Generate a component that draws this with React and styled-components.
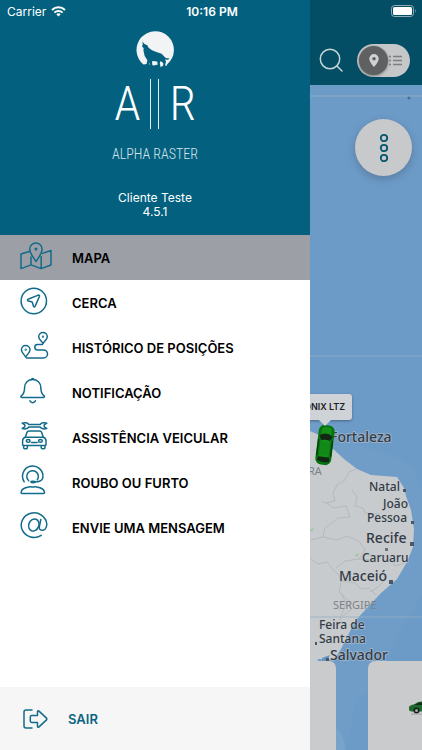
import React, { useState } from 'react';
import styled, { createGlobalStyle, css } from 'styled-components';

const GlobalStyle = createGlobalStyle`
  * {
    box-sizing: border-box;
  }
  body {
    margin: 0;
    font-family: Inter, "Liberation Sans", sans-serif;
  }
`;

const brandFont = css`
  font-family: "Roboto Condensed", "Liberation Sans Narrow", Lato, sans-serif;
  font-weight: 300;
`;

const Screen = styled.div`
  position: relative;
  display: flex;
  min-height: 100vh;
  overflow: hidden;
`;

const StatusBar = styled.div`
  position: absolute;
  z-index: 5;
  top: 0;
  left: 0;
  right: 0;
  display: grid;
  grid-template-columns: 1fr auto 1fr;
  align-items: center;
  height: 22px;
  padding: 0 5px 0 7px;
  font-size: 12px;
  color: #fff;
`;

const Carrier = styled.span`
  display: flex;
  align-items: center;
  gap: 5px;
`;

const Clock = styled.time`
  font-weight: 600;
`;

const Battery = styled.svg`
  justify-self: end;
`;

const Drawer = styled.aside`
  display: flex;
  flex: none;
  flex-direction: column;
  width: 310px;
  background-color: #fff;
`;

const Brand = styled.header`
  display: flex;
  flex-direction: column;
  align-items: center;
  height: 235px;
  padding-top: 31px;
  background-color: #03617f;
  color: #fff;
`;

const Monogram = styled.div`
  display: flex;
  align-items: center;
  justify-content: center;
  gap: 10px;
  height: 50px;
  margin-top: 9px;
  ${brandFont}
  font-size: 48px;
  line-height: 50px;
`;

const Bars = styled.span`
  width: 9px;
  height: 50px;
  border: solid #e3eef2;
  border-width: 0 1px;
`;

const BrandName = styled.div`
  margin-top: 14px;
  ${brandFont}
  font-size: 14px;
  line-height: 22px;
  color: #d5e5ec;
`;

const Account = styled.p`
  margin: 26px 0 0;
  font-size: 12px;
  line-height: 14px;
  text-align: center;
`;

const Menu = styled.nav`
  display: flex;
  flex: 1;
  flex-direction: column;
`;

const MenuLink = styled.a`
  display: flex;
  align-items: center;
  gap: 20px;
  height: 45px;
  padding-left: 20px;
  font-size: 13px;
  font-weight: 600;
  color: #000;
  text-decoration: none;
  ${props => props.$active && css`
    background-color: #9c9fa6;
  `}
`;

const LineIcon = styled.svg`
  flex: none;
  overflow: visible;
  fill: none;
  stroke: #126b8a;
  stroke-width: 1.5;
  stroke-linecap: round;
  stroke-linejoin: round;
`;

const MenuIcon = styled(LineIcon)`
  margin-bottom: 4px;
`;

const LogoutButton = styled.button`
  display: flex;
  align-items: center;
  gap: 20px;
  height: 63px;
  padding: 0 0 0 23px;
  border: none;
  background-color: #f6f6f6;
  font-family: inherit;
  font-size: 13px;
  font-weight: 600;
  color: #0c6482;
  cursor: pointer;
`;

const Main = styled.main`
  display: flex;
  flex: 1;
  flex-direction: column;
  min-width: 0;
  overflow: hidden;
`;

const Toolbar = styled.header`
  display: flex;
  align-items: center;
  justify-content: flex-end;
  gap: 14px;
  height: 85px;
  padding: 35px 12px 0 0;
  background-color: #034e65;
`;

const SearchButton = styled.button`
  display: flex;
  padding: 0;
  border: none;
  background: none;
  cursor: pointer;
`;

const ViewSwitch = styled.button`
  display: flex;
  flex-direction: ${props => (props.$list ? 'row-reverse' : 'row')};
  align-items: center;
  justify-content: space-between;
  width: 53px;
  height: 33px;
  padding: 0 8px 0 2px;
  border: none;
  border-radius: 17px;
  background-color: #c5c7c9;
  cursor: pointer;
`;

const Knob = styled.span`
  display: flex;
  align-items: center;
  justify-content: center;
  width: 29px;
  height: 29px;
  border-radius: 50%;
  background-color: #5f6061;
  box-shadow: 0 1px 3px rgba(0, 0, 0, 0.4);
`;

const MapArea = styled.section`
  position: relative;
  flex: 1;
  overflow: hidden;
  background-color: #6d9bc8;
`;

const MapDrawing = styled.svg`
  position: absolute;
  inset: 0;
  width: 100%;
  height: 100%;
  font-family: "Noto Sans", "Open Sans", sans-serif;
`;

const OptionsButton = styled.button`
  position: absolute;
  top: 34px;
  right: 10px;
  display: flex;
  align-items: center;
  justify-content: center;
  width: 57px;
  height: 57px;
  padding: 0;
  border: none;
  border-radius: 50%;
  background-color: #c8c9cb;
  box-shadow: 0 3px 10px rgba(0, 0, 0, 0.2);
  cursor: pointer;
`;

const VehicleMarker = styled.div`
  position: absolute;
  top: 309px;
  left: -13px;
  display: flex;
  flex-direction: column;
  align-items: center;
  gap: 4px;
`;

const Callout = styled.div`
  position: relative;
  padding: 0 7px;
  border-radius: 3px;
  background-color: #cfd3d8;
  box-shadow: 0 1px 3px rgba(0, 0, 0, 0.35);
  font-size: 9px;
  font-weight: 600;
  line-height: 26px;
  color: #222;
  white-space: nowrap;
  &::after {
    content: "";
    position: absolute;
    top: 26px;
    left: 50%;
    margin-left: -6px;
    border: 6px solid transparent;
    border-top-color: #cfd3d8;
    border-bottom: none;
  }
`;

const Cards = styled.div`
  position: absolute;
  right: 0;
  bottom: 0;
  left: 0;
  display: flex;
  gap: 32px;
  height: 89px;
`;

const PreviousCard = styled.article`
  width: 26px;
  border-radius: 0 7px 0 0;
  background-color: #cacbcc;
`;

const VehicleCard = styled.article`
  display: flex;
  flex: 1;
  justify-content: flex-end;
  padding-top: 38px;
  border-radius: 7px 0 0 0;
  background-color: #cacbcc;
`;

const MENU = [
  {
    id: 'mapa',
    label: 'MAPA',
    icon: (
      <>
        <path d="M9.3 9.5 1 12v14.6l10-3.7 10.2 3.7L31 23V8.5l-8.6 2.9M11 15v7.9M21.2 14.5v12.1" />
        <path d="M16 19.5C13.5 15.5 9.7 11.5 9.7 7.2a6.2 6.2 0 0 1 12.4 0C22.1 11.5 18.5 15.5 16 19.5z" />
        <circle cx="16" cy="7" r="0.8" />
      </>
    ),
  },
  {
    id: 'cerca',
    label: 'CERCA',
    icon: (
      <>
        <circle cx="13.8" cy="14" r="12.7" />
        <path d="M18.3 8.1 8 12.3q-1.2.8 0 1.6l3.5.8q.8.3 1 1l1 3.7q.8 1.2 1.6 0L19.5 9.2q.2-1.2-1.2-1.1z" />
      </>
    ),
  },
  {
    id: 'historico',
    label: 'HISTÓRICO DE POSIÇÕES',
    icon: (
      <>
        <path d="M23 11.5c-1.5-2.5-4.3-4-4.3-6.8a4.3 4.3 0 0 1 8.6 0c0 2.8-2.8 4.3-4.3 6.8z" />
        <path d="M5.7 25c-1.5-2.5-4.3-4.5-4.3-7.3a4.3 4.3 0 0 1 8.6 0c0 2.8-2.8 4.8-4.3 7.3z" />
        <path d="M22.5 12.5H17.5a2.7 2.7 0 0 0 0 5.4h6a4 4 0 0 1 0 8H6.5" />
        <circle cx="23" cy="4.7" r="0.4" />
        <circle cx="5.7" cy="17.7" r="0.4" />
      </>
    ),
  },
  {
    id: 'notificacao',
    label: 'NOTIFICAÇÃO',
    icon: (
      <>
        <path d="M1.8 20.5h21.8c1 0 1.2-1 .5-1.6-2.7-2-3.3-4.4-3.3-8.4 0-4.6-3.6-8-8.1-8s-8.1 3.4-8.1 8c0 4-.6 6.4-3.3 8.4-.7.6-.5 1.6.5 1.6z" />
        <path d="M11.6 2.5a1.1 1.1 0 0 1 2.2 0M9.9 23.8a3 3 0 0 0 5.6 0" />
      </>
    ),
  },
  {
    id: 'assistencia',
    label: 'ASSISTÊNCIA VEICULAR',
    icon: (
      <>
        <path d="M8.7 2.6h11.6C21 .7 24.7.2 26.8 1.2L24.2 2.8v2L26.8 6.4c-2.1 1-5.8.5-6.5-1.4H8.7C8 6.9 4.3 7.4 2.2 6.4l2.6-1.6v-2L2.2 1.2C4.3.2 8 .7 8.7 2.6z" />
        <path d="M5.3 15.3 7 10.3q.5-1.4 2-1.4h10.6q1.5 0 2 1.4l1.7 5" />
        <path d="M5.5 15.3h17.6q2.9.6 2.9 3.5v4q0 .7-.7.7H3.3q-.7 0-.7-.7v-4q0-2.9 2.9-3.5zM3.6 23.5v2q0 1.2 1.2 1.2h1.4q1.2 0 1.2-1.2v-2M21.2 23.5v2q0 1.2 1.2 1.2h1.4q1.2 0 1.2-1.2v-2M11.5 20.5h5.6" />
        <ellipse cx="8.2" cy="18.9" rx="1.9" ry="1.4" />
        <ellipse cx="20.4" cy="18.9" rx="1.9" ry="1.4" />
      </>
    ),
  },
  {
    id: 'roubo',
    label: 'ROUBO OU FURTO',
    icon: (
      <>
        <path d="M4.2 14.8A10.2 10.2 0 1 1 22.9 10c0 3.2-3.3 4.7-7.5 5" />
        <path d="M8.7 13.8a5.8 5.8 0 1 1 8.6-1" />
        <ellipse cx="13" cy="15" rx="2.2" ry="0.7" />
        <path d="M1.9 26.4h21.8q.9 0 .8-1c-.4-3.9-3.5-4.8-7.7-5.4q-1-.5-2-.2-2 .6-4 0-1-.3-2 .2c-4.2.6-7.3 1.5-7.7 5.4q-.1 1 .8 1z" />
      </>
    ),
  },
  {
    id: 'mensagem',
    label: 'ENVIE UMA MENSAGEM',
    icon: (
      <>
        <path d="M21.2 23.3A12.8 12.3 0 1 1 26.8 12c0 4-2.3 6.3-4.8 6.3-2.4 0-3-1.7-2.6-3.8l1.4-7" />
        <ellipse cx="13.8" cy="13" rx="5" ry="6.2" transform="rotate(22 13.8 13)" />
      </>
    ),
  },
];

const CITIES = [
  { name: 'Fortaleza', x: 20, y: 357, size: 14 },
  { name: 'Natal', x: 59, y: 406, size: 12 },
  { name: 'João', x: 73, y: 423, size: 12 },
  { name: 'Pessoa', x: 57, y: 437, size: 12 },
  { name: 'Recife', x: 56, y: 458, size: 14 },
  { name: 'Caruaru', x: 52, y: 477, size: 12 },
  { name: 'Maceió', x: 29, y: 496, size: 14 },
  { name: 'Feira de', x: 9, y: 544, size: 12 },
  { name: 'Santana', x: 9, y: 558, size: 12 },
  { name: 'Salvador', x: 20, y: 575, size: 14 },
];

const WolfMoon = () => (
  <svg width="38" height="39" viewBox="0 0 38 39">
    <path d="M7.5 33.5A18.7 18.7 0 1 1 31.5 33L30 35.500 28 34 25 36 22 33.500 18 34.500 11 33z" fill="#f1f3f5" />
    <path
      fill="#03617f"
      d="M6.3 10.5L8.5 13l2.800 1.200 1.300 2.600 3.400 2.400 5 2 4.600 1.600 2.600 2.600 1.600 1.600 3.800.5-1.600 1.300-3-.2 1 2-.8 3.400 1.200 2h-3l-.2-4-2.600-2-.8 2 .6 3.200h-2.400l-.8-4.600-4.200-.6-1 .6.4 4.200h-2.200l-.4-3.600-.8 3.600-2.800-.2 1.200-5.400-2.700-4.200-1.200-5 .1-3L6 15.400l.8-2.200z"
    />
  </svg>
);

const MapCanvas = () => (
  <MapDrawing viewBox="0 0 112 665" preserveAspectRatio="xMinYMin slice">
    <path d="M0 318C20 335 28 348 45 359L85 372 103 382 112 405V510L91 544 62 600 45 620 36 665H0z" fill="#78a3cb" opacity="0.3" />
    <path
      fill="#c8cbcd"
      d="M0 346L9 350 22 363 34 374 47 384 61 390 87 392 94 403 96 411 101 425 104 444 103 462 97 477 87 494 71 508 57 523 46 535 38 550 31 564 24 575 8 574 4 590 0 590z"
    />
    <path d="M0 643q10-6 20-4 14 6 15 26H0z" fill="#78a3cb" />
    <path
      fill="none"
      stroke="#b0b4b7"
      strokeWidth="0.8"
      d="M46 384l-7 3-5 9-7 4-4 8 2 8-8 2-5-1M42 405l5 7-2 9 8 2 2 5 15 1M17 418l6 5 13-2 4 11-12 1-13 10-2 9-12 3M13 452l14 3 10-4 12 5 6 9-6 9-14 2-9 7M49 474l12 1 10-5 8 2 6 9 10-3M0 473l8 6 9-2 6 8 6 5 2 8-2 9 10 9 2 9-8 6M31 496l14 2 6 6 8-1 7 7M60 507l8-5 6-6M31 508l5 10-6 16 6 7"
    />
    <path d="M12 573l8-3-4 8-3 3z" fill="#6394c3" />
    <path d="M45 470l4-2-2 4zM0 445l4-2-2 4z" fill="#9bc49a" />
    <path d="M0 11H112M0 271H112M0 532H112" stroke="#96aec4" strokeWidth="0.8" />
    <g fill="#4b5563">
      <circle cx="99" cy="13" r="1.6" fill="#526f91" />
      <rect x="93" y="404" width="3" height="3" />
      <rect x="101" y="436" width="3" height="3" />
      <rect x="100" y="457" width="4" height="4" />
      <rect x="75" y="463" width="3" height="3" fill="#68747f" />
      <rect x="79" y="495" width="4" height="4" />
      <rect x="5" y="557" width="2" height="3" />
      <rect x="16" y="573" width="3" height="3" />
    </g>
    <g fontSize="11" fill="#7d828a">
      <text x="-2" y="390">RA</text>
      <text x="23" y="524">SERGIPE</text>
    </g>
    <g fill="#333b47" stroke="#c8cbcd" strokeWidth="1.5" strokeOpacity="0.6" paintOrder="stroke" fontWeight="500">
      {CITIES.map(city => (
        <text key={city.name} x={city.x} y={city.y} fontSize={city.size}>{city.name}</text>
      ))}
    </g>
  </MapDrawing>
);

const TopViewCar = () => (
  <svg width="22" height="42" viewBox="0 0 22 42">
    <g transform="rotate(7 11 21)">
      <rect x="3" y="1" width="16" height="40" rx="6" fill="#06730f" />
      <rect x="6" y="3" width="10" height="34" rx="4" fill="#139018" />
      <path d="M4.5 12q6.5-5 13 0l-2 4.5q-4.5-1.5-9 0z" fill="#142616" />
      <path d="M5.5 33h11l.8 4q-6.3 2.5-12.6 0z" fill="#142616" />
      <path d="M4 16v16M18 16v16" stroke="#053c0a" strokeWidth="1.3" />
      <path d="M6 18h10v13H6z" fill="#118817" />
    </g>
  </svg>
);

const App = () => {
  const [active, setActive] = useState('mapa');
  const [listView, setListView] = useState(false);

  return (
    <>
      <GlobalStyle />
      <Screen>
        <StatusBar>
          <Carrier>
            Carrier
            <svg width="15" height="11" viewBox="0 0 15 11" fill="none" stroke="#fff" strokeWidth="2">
              <path d="M1 4a9.3 9.3 0 0 1 13 0M3.4 6.6a5.8 5.8 0 0 1 8.2 0" />
              <path d="M7.5 10.5 5.3 8.3a3.2 3.2 0 0 1 4.4 0z" fill="#fff" stroke="none" />
            </svg>
          </Carrier>
          <Clock>10:16 PM</Clock>
          <Battery width="26" height="12" viewBox="0 0 26 12">
            <rect x="0.5" y="0.5" width="22" height="11" rx="3" fill="none" stroke="#8faeb9" />
            <rect x="2" y="2" width="19" height="8" rx="1.5" fill="#fff" />
            <path d="M24 4q1.5 2 0 4z" fill="#8faeb9" />
          </Battery>
        </StatusBar>

        <Drawer>
          <Brand>
            <WolfMoon />
            <Monogram>
              <span>A</span>
              <Bars />
              <span>R</span>
            </Monogram>
            <BrandName>ALPHA RASTER</BrandName>
            <Account>
              Cliente Teste
              <br />
              4.5.1
            </Account>
          </Brand>
          <Menu>
            {MENU.map(item => (
              <MenuLink
                key={item.id}
                href={`#${item.id}`}
                $active={active === item.id}
                onClick={() => setActive(item.id)}
              >
                <MenuIcon width="32" height="28" viewBox="0 0 32 28">{item.icon}</MenuIcon>
                {item.label}
              </MenuLink>
            ))}
          </Menu>
          <LogoutButton type="button">
            <LineIcon width="25" height="20" viewBox="0 0 25 20">
              <path d="M9 1H3Q1 1 1 3v14q0 2 2 2h6" />
              <path d="M8.7 6.5h5.8v-4q.3-1.3 1.5-.4l7.5 7q.8.9 0 1.8l-7.5 7q-1.2.9-1.5-.4v-4H8.7q-1.4 0-1.4-1.4V7.9q0-1.4 1.4-1.4z" />
            </LineIcon>
            SAIR
          </LogoutButton>
        </Drawer>

        <Main>
          <Toolbar>
            <SearchButton type="button" aria-label="Buscar">
              <svg width="24" height="24" viewBox="0 0 24 24" fill="none" stroke="#c5d3d5" strokeWidth="1.5" strokeLinecap="round">
                <circle cx="11" cy="11" r="9.7" />
                <path d="M18 18l5 5" />
              </svg>
            </SearchButton>
            <ViewSwitch
              type="button"
              role="switch"
              aria-label="Lista"
              aria-checked={listView}
              $list={listView}
              onClick={() => setListView(!listView)}
            >
              <Knob>
                <svg width="10" height="13" viewBox="0 0 10 13">
                  <path
                    fill="#cfd1d2"
                    fillRule="evenodd"
                    d="M5 0a4.7 4.7 0 0 1 4.7 4.7C9.7 8 5 13 5 13S.3 8 .3 4.7A4.7 4.7 0 0 1 5 0zm0 3a1.8 1.8 0 1 0 0 3.6A1.8 1.8 0 0 0 5 3z"
                  />
                </svg>
              </Knob>
              <svg width="13" height="11" viewBox="0 0 13 11" stroke="#7b7d80" strokeWidth="1.4">
                <path d="M0 1.5h2M4 1.5h9M0 5.5h2M4 5.5h9M0 9.5h2M4 9.5h9" />
              </svg>
            </ViewSwitch>
          </Toolbar>
          <MapArea>
            <MapCanvas />
            <VehicleMarker>
              <Callout>ONIX LTZ</Callout>
              <TopViewCar />
            </VehicleMarker>
            <OptionsButton type="button" aria-label="Opções">
              <svg width="10" height="30" viewBox="0 0 10 30" fill="none" stroke="#05566e" strokeWidth="1.8">
                <circle cx="5" cy="5" r="3.2" />
                <circle cx="5" cy="15" r="3.2" />
                <circle cx="5" cy="25" r="3.2" />
              </svg>
            </OptionsButton>
            <Cards>
              <PreviousCard />
              <VehicleCard>
                <svg width="13" height="18" viewBox="0 0 13 18">
                  <path d="M0 8q1-2 5-2.5L9 3l4-.5v10H4Q1 13 0 11z" fill="#1b6a2c" />
                  <path d="M5 6l5-2.3 3-.2V6z" fill="#16271a" />
                  <circle cx="7.5" cy="11.5" r="3" fill="#171c19" />
                  <circle cx="7.5" cy="11.5" r="1.5" fill="#a4a9aa" />
                  <path d="M2 15h11" stroke="#8d9294" strokeWidth="0.8" />
                </svg>
              </VehicleCard>
            </Cards>
          </MapArea>
        </Main>
      </Screen>
    </>
  );
};

export default App;
